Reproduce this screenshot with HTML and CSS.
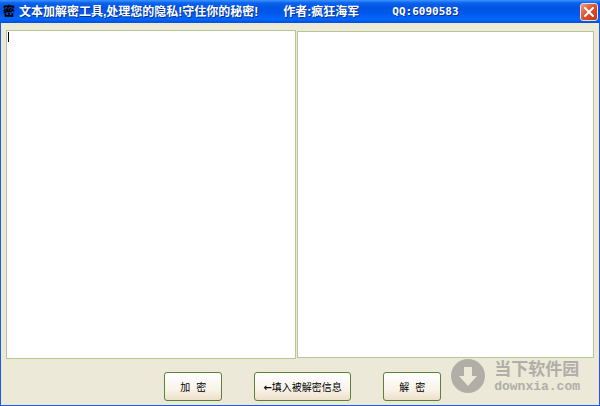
FILE: index.html
```html
<!DOCTYPE html>
<html lang="zh-CN">
<head>
  <meta charset="UTF-8" />
  <meta name="viewport" content="width=device-width, initial-scale=1.0"/>
  <title>文本加解密工具</title>
  <link rel="stylesheet" href="styles.css">
</head>
<body>

  <div class="window">
    <header class="title-bar">
      <span class="app-icon">密</span>
      <h1 class="title">
        <span>文本加解密工具,处理您的隐私!守住你的秘密!</span>
        <span>作者:疯狂海军</span>
        <span class="qq">QQ:6090583</span>
      </h1>
      <button class="close-btn" type="button" aria-label="关闭">
        <svg width="12" height="12" viewBox="0 0 12 12">
          <path d="M2 2 L10 10 M10 2 L2 10" stroke="#fff" stroke-width="2" stroke-linecap="round"/>
        </svg>
      </button>
    </header>

    <main class="content">
      <div class="panes">
        <div class="pane-wrap pane-source">
          <textarea class="pane" aria-label="原文"></textarea>
          <span class="caret"></span>
        </div>
        <div class="pane-wrap pane-result">
          <textarea class="pane" aria-label="结果"></textarea>
        </div>
      </div>

      <footer class="bottom">
        <div class="actions">
          <button class="btn" type="button">加 密</button>
          <button class="btn btn-wide" type="button"><span class="arrow">←</span>填入被解密信息</button>
          <button class="btn" type="button">解 密</button>
        </div>
        <div class="brand">
          <svg width="34" height="34" viewBox="0 0 34 34">
            <circle cx="17" cy="17" r="17" fill="#b0aea7"/>
            <path d="M13 8 H21 V17 H26 L17 27 L8 17 H13 Z" fill="#ece9d8"/>
          </svg>
          <div class="brand-text">
            <span class="brand-name">当下软件园</span>
            <span class="brand-url">downxia.com</span>
          </div>
        </div>
      </footer>
    </main>
  </div>

</body>
</html>
```
FILE: styles.css
```css
* {
  box-sizing: border-box;
}

body {
  margin: 0;
  font-family: "Liberation Sans", "Noto Sans CJK SC", sans-serif;
  font-size: 12px;
}

.window {
  display: flex;
  flex-direction: column;
  height: 100vh;
  background: #1c5ce4;
}

.title-bar {
  display: flex;
  align-items: center;
  height: 23px;
  padding: 0 2px 0 3px;
  color: white;
  background: linear-gradient(to bottom, #3d95ff 0, #0a62ee 3px, #0054e3 8px, #0058ea 13px, #0066ff 19px, #0050d8 23px);
}

.app-icon {
  width: 16px;
  color: black;
  font-weight: 900;
  line-height: 20px;
}

.title {
  display: flex;
  flex: 1;
  align-items: center;
  gap: 25px;
  margin: 0;
  font-size: 12px;
  font-weight: bold;
  line-height: 20px;
  white-space: nowrap;
  text-shadow: 1px 1px 0 #0a2f8c;
}

.qq {
  margin-left: 8px;
  font-family: "DejaVu Sans Mono", monospace;
  font-size: 11px;
}

.close-btn {
  display: flex;
  align-items: center;
  justify-content: center;
  width: 18px;
  height: 18px;
  padding: 0;
  border: 1px solid #f3dcdc;
  border-radius: 3px;
  background: linear-gradient(135deg, #ee9a80, #dd4f2c 50%, #c03a18);
}

.content {
  display: flex;
  flex: 1;
  flex-direction: column;
  margin: 0 1px 1px;
  padding: 7px 5px 4px;
  background: #ece9d8;
}

.panes {
  display: flex;
  flex: 1;
  gap: 1px;
}

.pane-wrap {
  position: relative;
  display: flex;
}

.pane-source {
  flex: 290;
}

.pane-result {
  flex: 297;
  padding: 1px 0;
}

.pane {
  flex: 1;
  min-width: 0;
  margin: 0;
  padding: 1px;
  border: 1px solid #b5c795;
  outline: none;
  background: white;
  font-family: inherit;
  font-size: 12px;
  line-height: 12px;
  resize: none;
}

.caret {
  position: absolute;
  top: 2px;
  left: 2px;
  width: 1px;
  height: 10px;
  background: black;
}

.bottom {
  display: flex;
  align-items: flex-start;
  justify-content: flex-end;
  gap: 10px;
  height: 42px;
  padding-right: 14px;
}

.actions {
  display: flex;
  gap: 32px;
  padding-top: 13px;
}

.btn {
  width: 58px;
  height: 29px;
  padding: 0;
  border: 1px solid #5c8238;
  border-radius: 3px;
  background: linear-gradient(to bottom, #ffffff, #f8f4ea 60%, #eee0c8);
  color: black;
  font-family: "Liberation Mono", "Noto Sans CJK SC", monospace;
  font-size: 10px;
  white-space: nowrap;
}

.btn-wide {
  width: 97px;
}

.arrow {
  font-family: "DejaVu Sans", sans-serif;
  font-weight: bold;
}

.brand {
  display: flex;
  gap: 9px;
  color: #b0aea7;
}

.brand-text {
  display: flex;
  flex-direction: column;
  padding-top: 1px;
  font-weight: bold;
}

.brand-name {
  font-size: 17px;
  line-height: 20px;
}

.brand-url {
  font-family: "Liberation Mono", monospace;
  font-size: 13px;
  line-height: 14px;
}
```
